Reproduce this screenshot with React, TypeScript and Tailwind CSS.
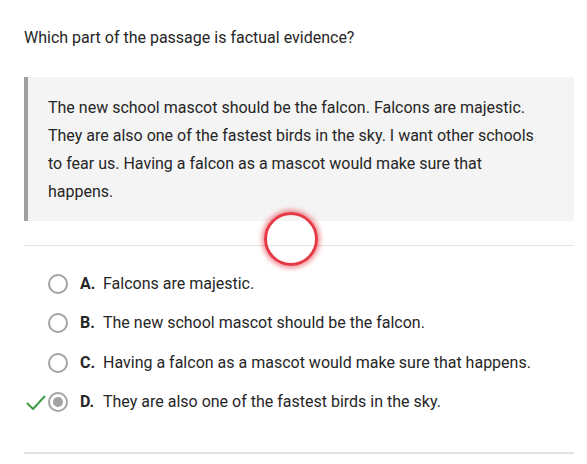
import React from "react";

const options = [
  { l: "A.", t: "Falcons are majestic.", sel: false },
  { l: "B.", t: "The new school mascot should be the falcon.", sel: false },
  { l: "C.", t: "Having a falcon as a mascot would make sure that happens.", sel: false },
  { l: "D.", t: "They are also one of the fastest birds in the sky.", sel: true },
];

export default function App() {
  return (
    <div
      className="relative w-[587px] h-[464px] bg-white text-[#262626] overflow-hidden"
      style={{ fontFamily: "Roboto, 'Liberation Sans', sans-serif" }}
    >
      <div className="pl-[24px] pr-[13px] pt-[26px]">
        <p className="text-[16px] leading-[24px]">Which part of the passage is factual evidence?</p>
        <div className="mt-[27px] bg-[#f4f4f4] border-l-[4px] border-[#a0a0a0] pl-[20px] pr-[24px] pt-[17px] pb-[15px]">
          <p className="text-[16px] leading-[28px]">
            The new school mascot should be the falcon. Falcons are majestic. They are also one of the fastest birds in
            the sky. I want other schools to fear us. Having a falcon as a mascot would make sure that happens.
          </p>
        </div>
        <div className="mt-[24px] h-px bg-[#e2e2e2]" />
        <div className="pt-[18px] flex flex-col">
          {options.map((o) => (
            <div key={o.l} className="relative flex items-center h-[39.5px]">
              {o.sel && (
                <svg
                  className="absolute left-[2px] top-[12px]"
                  width="20"
                  height="16"
                  viewBox="0 0 20 16"
                  fill="none"
                >
                  <path d="M1.5 8.5 L7 14 L18.5 1.5" stroke="#3f9b46" strokeWidth="2" strokeLinecap="round" strokeLinejoin="round" />
                </svg>
              )}
              <div className="ml-[24px] w-[20px] h-[20px] rounded-full border-2 border-[#a3a3a3] flex items-center justify-center bg-white">
                {o.sel && <div className="w-[10px] h-[10px] rounded-full bg-[#a3a3a3]" />}
              </div>
              <span className="ml-[12px] text-[16px] font-bold w-[23px]">{o.l}</span>
              <span className="text-[16px]">{o.t}</span>
            </div>
          ))}
        </div>
        <div className="mt-[30px] h-[2px] bg-[#e2e2e2]" />
      </div>
      <div className="absolute left-[264px] top-[212px] w-[54px] h-[54px] rounded-full border-[3px] border-[#e63946] shadow-[0_0_5px_2px_rgba(230,57,70,0.6)]" />
    </div>
  );
}
